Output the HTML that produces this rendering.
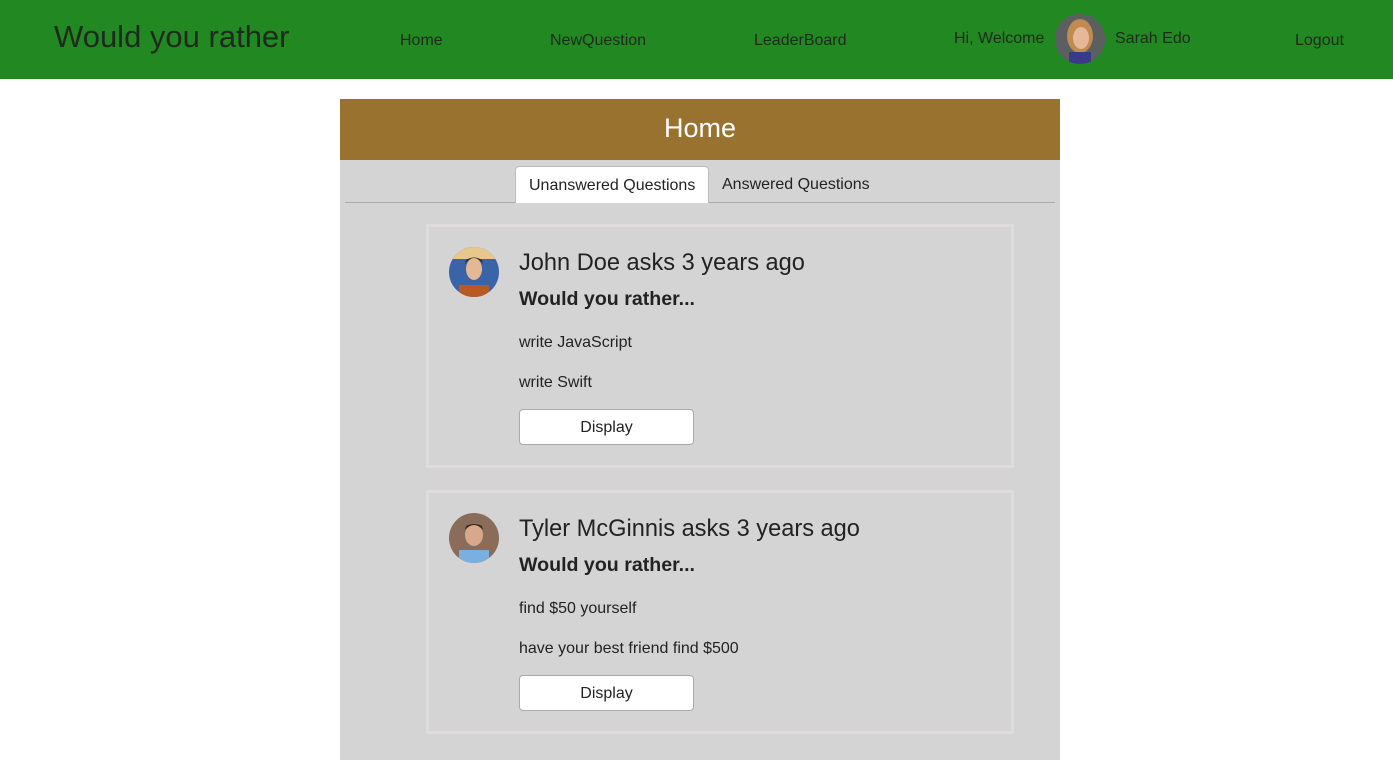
<!DOCTYPE html>
<html><head><meta charset="utf-8"><style>
*{box-sizing:border-box;margin:0;padding:0}
body{width:1393px;height:760px;overflow:hidden;background:#fff;font-family:"Liberation Sans",sans-serif;color:#222}
.hdr{position:absolute;left:0;top:0;width:1393px;height:79px;background:#228822}
.hdr span{position:absolute;color:#1e2a1e;font-size:16px}
.logo{left:54px;top:19px;font-size:31px!important}
.av{position:absolute;border-radius:50%;overflow:hidden}
.main{position:absolute;left:340px;top:99px;width:720px;height:661px;background:#d4d4d4}
.title{height:61px;background:#9a7230;color:#fff;font-size:27px;text-align:center;line-height:58px}
.tabs{position:absolute;left:5px;top:103px;width:710px;border-bottom:1px solid #aaa;height:1px}
.tab{position:absolute;top:67px;height:37px;font-size:16px;line-height:37px;padding:0 13px}
.tab.a{left:175px;background:#fff;border:1px solid #bbb;border-bottom:none;border-radius:4px 4px 0 0}
.card{position:absolute;left:86px;width:588px;height:244px;border:3px solid #dedcdc}
.card .av{left:20px;top:20px;width:50px;height:50px}
.nm{position:absolute;left:90px;top:23px;font-size:23.6px}
.q{position:absolute;left:90px;top:61px;font-size:19.6px;font-weight:bold}
.o{position:absolute;left:90px;font-size:16px}
.btn{position:absolute;left:90px;top:182px;width:175px;height:36px;background:#fff;border:1px solid #aaa;border-radius:4px;text-align:center;line-height:36px;font-size:16px}
</style></head><body>
<div class="hdr">
<span class="logo">Would you rather</span>
<span style="left:400px;top:32px">Home</span>
<span style="left:550px;top:32px">NewQuestion</span>
<span style="left:754px;top:32px">LeaderBoard</span>
<span style="left:954px;top:30px">Hi, Welcome</span>
<div class="av" style="left:1055px;top:14px;width:50px;height:50px;background:#666"><svg width="50" height="50"><rect width="50" height="50" fill="#5c5f60"/><ellipse cx="25" cy="22" rx="13" ry="17" fill="#c08a50"/><ellipse cx="26" cy="24" rx="8" ry="11" fill="#e6b899"/><rect x="14" y="38" width="22" height="14" fill="#3a3a8a"/></svg></div>
<span style="left:1115px;top:30px">Sarah Edo</span>
<span style="left:1295px;top:32px">Logout</span>
</div>
<div class="main">
<div class="title">Home</div>
<div class="tabs"></div>
<div class="tab a">Unanswered Questions</div>
<div class="tab" style="left:369px">Answered Questions</div>
<div class="card" style="top:125px">
<div class="av"><svg width="50" height="50"><rect width="50" height="50" fill="#3a64a8"/><rect width="50" height="12" fill="#e8c88a"/><ellipse cx="25" cy="22" rx="8" ry="11" fill="#e2b896"/><path d="M16 17 Q25 5 34 17 L33 13 Q25 8 17 13Z" fill="#3a2a20"/><rect x="10" y="38" width="30" height="12" fill="#b85a22"/></svg></div>
<div class="nm">John Doe asks 3 years ago</div>
<div class="q">Would you rather...</div>
<div class="o" style="top:107px">write JavaScript</div>
<div class="o" style="top:147px">write Swift</div>
<div class="btn">Display</div>
</div>
<div class="card" style="top:391px">
<div class="av"><svg width="50" height="50"><rect width="50" height="50" fill="#8a6c5a"/><ellipse cx="25" cy="22" rx="9" ry="11" fill="#d8a88a"/><path d="M16 17 Q25 7 34 17 L33 13 Q25 9 17 13Z" fill="#3a2a20"/><rect x="10" y="37" width="30" height="13" fill="#7ab0e0"/></svg></div>
<div class="nm">Tyler McGinnis asks 3 years ago</div>
<div class="q">Would you rather...</div>
<div class="o" style="top:107px">find $50 yourself</div>
<div class="o" style="top:147px">have your best friend find $500</div>
<div class="btn">Display</div>
</div>
</div>
</body></html>
